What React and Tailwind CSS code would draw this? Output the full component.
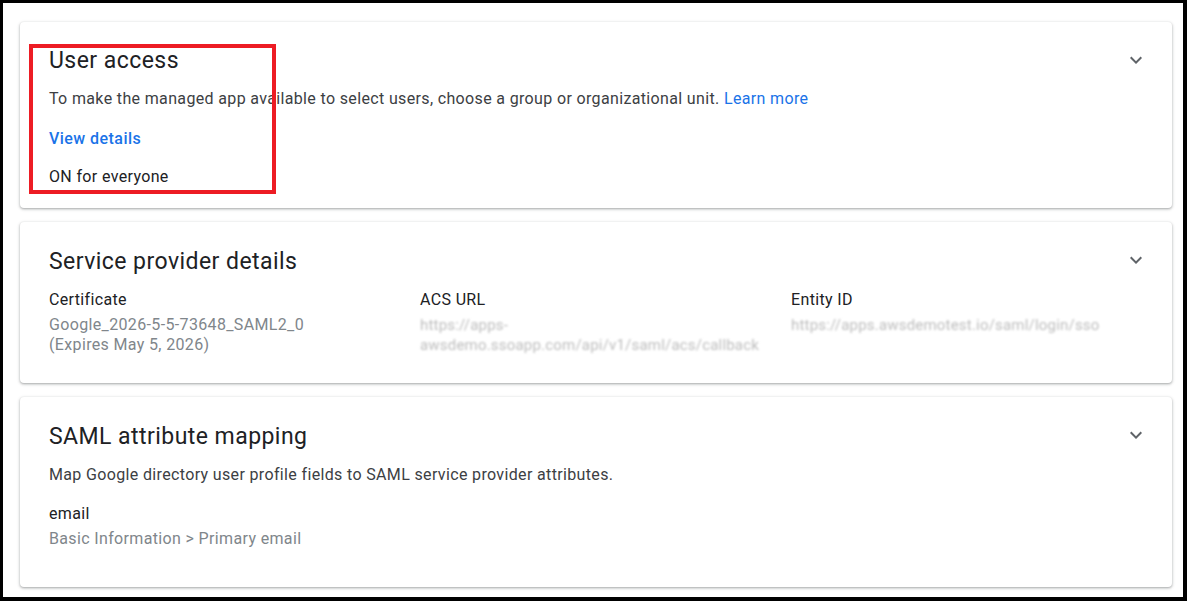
import React from "react";

function Chevron() {
  return (
    <svg width="24" height="24" viewBox="0 0 24 24" className="text-[#5f6368]">
      <path d="M7.41 8.59 12 13.17l4.59-4.58L18 10l-6 6-6-6 1.41-1.41z" fill="currentColor" />
    </svg>
  );
}

function Card({ children, className = "" }) {
  return (
    <div
      className={
        "relative bg-white rounded-[4px] shadow-[0_1px_2px_0_rgba(60,64,67,0.3),0_1px_3px_1px_rgba(60,64,67,0.15)] pl-[29px] pr-[24px] " +
        className
      }
    >
      <div className="absolute right-[24px] top-[26px]">
        <Chevron />
      </div>
      {children}
    </div>
  );
}

export default function App() {
  return (
    <div
      className="w-[1187px] h-[601px] bg-white border-black border-t-[3px] border-l-[3px] border-r-[4px] border-b-[4px] box-border overflow-hidden"
      style={{ fontFamily: "Roboto, 'Liberation Sans', sans-serif" }}
    >
      <div className="relative flex flex-col gap-[14px] pt-[19px] pl-[17px] pr-[11px] tracking-[0.35px]">
        <Card className="h-[186px] pt-[25px]">
          <div className="text-[23px] leading-[28px] tracking-[0.45px] text-[#202124]">User access</div>
          <div className="mt-[12px] text-[16px] leading-[24px] text-[#3c4043]">
            To make the managed app available to select users, choose a group or organizational unit.{" "}
            <span className="text-[#1a73e8]">Learn more</span>
          </div>
          <div className="mt-[16px] text-[16px] leading-[24px] font-medium tracking-[0.45px] text-[#1a73e8]">View details</div>
          <div className="mt-[14px] text-[16px] leading-[24px] text-[#202124]">ON for everyone</div>
        </Card>

        <Card className="h-[161px] pt-[26px]">
          <div className="text-[23px] leading-[28px] tracking-[0.45px] text-[#202124]">Service provider details</div>
          <div className="mt-[12px] grid grid-cols-[371px_371px_1fr] text-[16px]">
            <div>
              <div className="leading-[24px] text-[#202124]">Certificate</div>
              <div className="mt-[3px] leading-[20px] text-[#80868b]">
                Google_2026-5-5-73648_SAML2_0
                <br />
                (Expires May 5, 2026)
              </div>
            </div>
            <div>
              <div className="leading-[24px] text-[#202124]">ACS URL</div>
              <div className="mt-[3px] leading-[20px] text-[#bdbdbd] blur-[1px] tracking-[0.2px] text-[15px] whitespace-nowrap">
                https://apps-
                <br />
                awsdemo.ssoapp.com/api/v1/saml/acs/callback
              </div>
            </div>
            <div>
              <div className="leading-[24px] text-[#202124]">Entity ID</div>
              <div className="mt-[3px] leading-[20px] text-[#bdbdbd] blur-[1px] tracking-[0.2px] text-[15px] whitespace-nowrap">
                https://apps.awsdemotest.io/saml/login/sso
              </div>
            </div>
          </div>
        </Card>

        <Card className="h-[190px] pt-[26px]">
          <div className="text-[23px] leading-[28px] tracking-[0.45px] text-[#202124]">SAML attribute mapping</div>
          <div className="mt-[12px] text-[16px] leading-[24px] text-[#3c4043]">
            Map Google directory user profile fields to SAML service provider attributes.
          </div>
          <div className="mt-[15px] text-[16px] leading-[24px] text-[#202124]">email</div>
          <div className="mt-[1px] text-[16px] leading-[24px] text-[#80868b]">Basic Information &gt; Primary email</div>
        </Card>

        <div className="absolute left-[26px] top-[41px] w-[247px] h-[150px] border-[4px] border-[#ed1c24]" />
      </div>
    </div>
  );
}
